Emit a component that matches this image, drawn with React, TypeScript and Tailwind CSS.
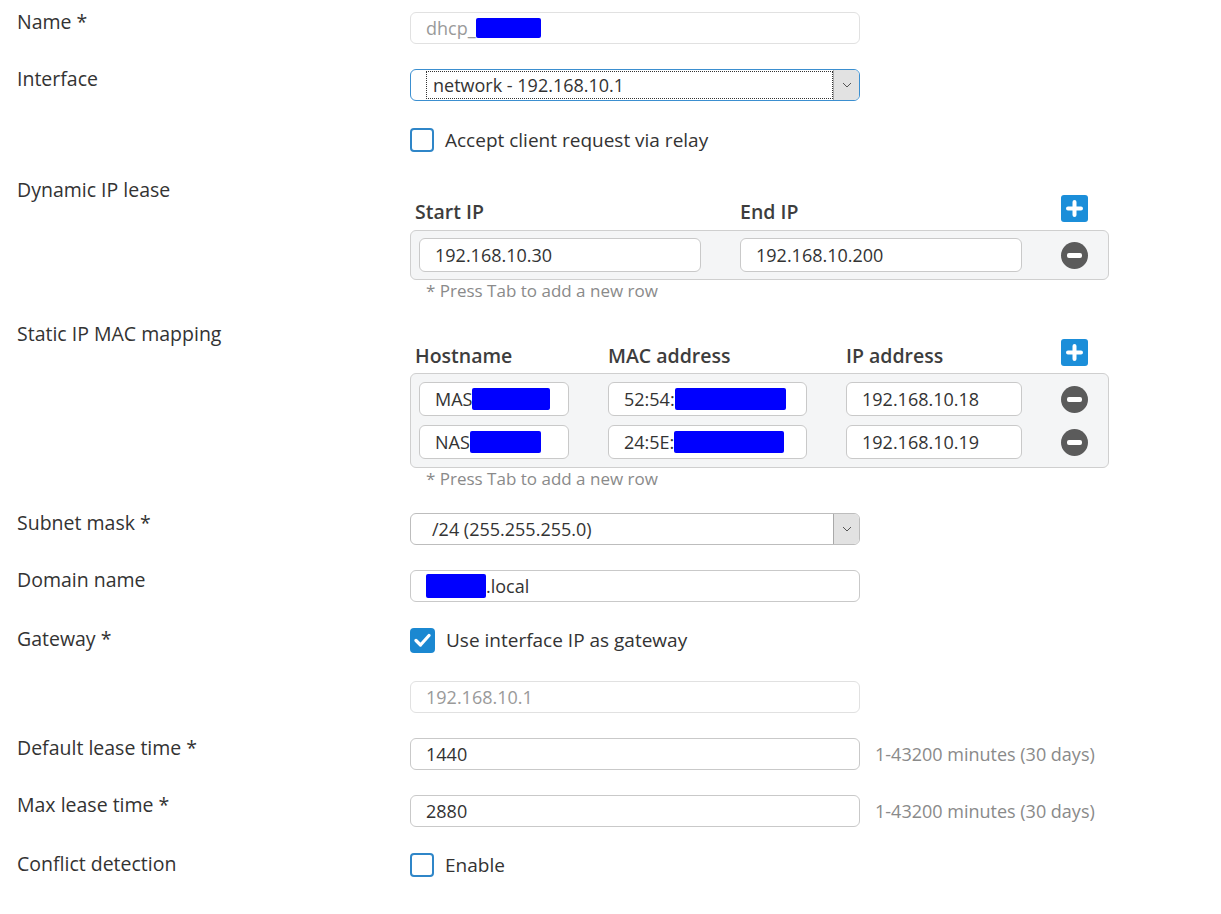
import React from 'react';

const Redact = ({ w, h = 22 }: { w: number; h?: number }) => (
  <span className="inline-block bg-[#0000ff] rounded-[2px] align-middle" style={{ width: w, height: h }} />
);

const TextBox = ({
  children,
  w = 'w-[450px]',
  h = 'h-[32px]',
  muted = false,
}: {
  children: React.ReactNode;
  w?: string;
  h?: string;
  muted?: boolean;
}) => (
  <div
    className={`${w} ${h} shrink-0 flex items-center px-[15px] rounded-[6px] border bg-white ${
      muted ? 'border-[#e1e1e1] text-[#9a9a9a]' : 'border-[#c9c9c9] text-[#333]'
    } text-[18px] whitespace-nowrap overflow-hidden`}
  >
    {children}
  </div>
);

const Select = ({ value, focused = false }: { value: string; focused?: boolean }) => (
  <div
    className={`w-[450px] h-[32px] flex rounded-[6px] border bg-white overflow-hidden ${
      focused ? 'border-[#3b8fd0]' : 'border-[#bdbdbd]'
    }`}
  >
    <div className="flex-1 pl-[15px] py-[1px] flex">
      <div
        className={`flex-1 flex items-center pl-[6px] text-[18px] text-[#333] ${
          focused ? 'border border-dotted border-[#333]' : ''
        }`}
      >
        {value}
      </div>
    </div>
    <div className="w-[26px] bg-[#e2e2e2] border-l border-[#a9a9a9] flex items-center justify-center">
      <svg width="10" height="6" viewBox="0 0 10 6">
        <path d="M1 1l4 4 4-4" fill="none" stroke="#555" strokeWidth="1" />
      </svg>
    </div>
  </div>
);

const Check = ({ checked = false, label }: { checked?: boolean; label: string }) => (
  <div className="flex items-center h-[22px]">
    {checked ? (
      <div className="w-[25px] h-[25px] shrink-0 rounded-[4px] bg-[#1b88d1] flex items-center justify-center">
        <svg width="17" height="14" viewBox="0 0 17 14">
          <path d="M2 7.5l4.5 4.5L15 2.5" fill="none" stroke="#fff" strokeWidth="3.2" strokeLinecap="round" strokeLinejoin="round" />
        </svg>
      </div>
    ) : (
      <div className="w-[24px] h-[24px] shrink-0 rounded-[4px] border-2 border-[#2f86c8] bg-white" />
    )}
    <span className="ml-[11px] text-[19px] leading-[22px] text-[#333]">{label}</span>
  </div>
);

const PlusBtn = () => (
  <div className="w-[27px] h-[27px] rounded-[3px] bg-[#1b8ed9] flex items-center justify-center">
    <svg width="17" height="17" viewBox="0 0 17 17">
      <path d="M8.5 2v13M2 8.5h13" stroke="#fff" strokeWidth="4" strokeLinecap="round" />
    </svg>
  </div>
);

const MinusBtn = () => (
  <div className="w-[27px] h-[27px] rounded-full bg-[#5b5b5b] flex items-center justify-center shrink-0">
    <div className="w-[15px] h-[5px] rounded-[2px] bg-white" />
  </div>
);

const Label = ({ children }: { children: React.ReactNode }) => (
  <div className="w-[410px] shrink-0 pl-[17px] text-[19.5px] leading-[25px] text-[#333] mt-[-3px]">{children}</div>
);

const Hint = () => (
  <div className="pl-[16px] h-[22px] leading-[22px] text-[17px] text-[#8a8a8a]">* Press Tab to add a new row</div>
);

const Range = () => (
  <div className="ml-[15px] h-[32px] flex items-center text-[18px] text-[#8a8a8a] whitespace-nowrap">
    1-43200 minutes (30 days)
  </div>
);

export default function App() {
  return (
    <div className="min-h-[914px] bg-white pt-[12px]" style={{ fontFamily: '"Open Sans", "Noto Sans", sans-serif' }}>
      {/* Name */}
      <div className="flex">
        <Label>Name *</Label>
        <TextBox muted>
          dhcp_
          <Redact w={65} h={20} />
        </TextBox>
      </div>

      {/* Interface */}
      <div className="flex mt-[25px]">
        <Label>Interface</Label>
        <Select value="network - 192.168.10.1" focused />
      </div>

      <div className="flex mt-[28px] pl-[410px]">
        <Check label="Accept client request via relay" />
      </div>

      {/* Dynamic IP lease */}
      <div className="flex mt-[26px]">
        <div className="w-[410px] shrink-0 pl-[17px] text-[19.5px] leading-[25px] text-[#333]">Dynamic IP lease</div>
        <div className="pt-[18px]">
          <div className="flex h-[27px] pl-[5px] text-[19.5px] font-semibold text-[#3d3d3d]">
            <div className="w-[325px] pt-[4px] leading-[25px]">Start IP</div>
            <div className="w-[321px] pt-[4px] leading-[25px]">End IP</div>
            <PlusBtn />
          </div>
          <div className="mt-[8px] w-[699px] border border-[#cfcfcf] rounded-[6px] bg-[#f4f5f6] px-[8px] py-[7px] flex items-center gap-[39px]">
            <TextBox w="w-[282px]" h="h-[34px]">192.168.10.30</TextBox>
            <TextBox w="w-[282px]" h="h-[34px]">192.168.10.200</TextBox>
            <MinusBtn />
          </div>
          <Hint />
        </div>
      </div>

      {/* Static IP MAC mapping */}
      <div className="flex mt-[19px]">
        <div className="w-[410px] shrink-0 pl-[17px] text-[19.5px] leading-[25px] text-[#333]">Static IP MAC mapping</div>
        <div className="pt-[18px]">
          <div className="flex h-[27px] pl-[5px] text-[19.5px] font-semibold text-[#3d3d3d]">
            <div className="w-[193px] pt-[4px] leading-[25px]">Hostname</div>
            <div className="w-[238px] pt-[4px] leading-[25px]">MAC address</div>
            <div className="w-[215px] pt-[4px] leading-[25px]">IP address</div>
            <PlusBtn />
          </div>
          <div className="mt-[7px] w-[699px] border border-[#cfcfcf] rounded-[6px] bg-[#f4f5f6] px-[8px] pt-[8px] pb-[8px] flex flex-col gap-[9px]">
            <div className="flex items-center gap-[39px]">
              <TextBox w="w-[150px]" h="h-[34px]">
                MAS
                <Redact w={78} />
              </TextBox>
              <TextBox w="w-[199px]" h="h-[34px]">
                52:54:
                <Redact w={111} />
              </TextBox>
              <TextBox w="w-[176px]" h="h-[34px]">192.168.10.18</TextBox>
              <MinusBtn />
            </div>
            <div className="flex items-center gap-[39px]">
              <TextBox w="w-[150px]" h="h-[34px]">
                NAS
                <Redact w={71} />
              </TextBox>
              <TextBox w="w-[199px]" h="h-[34px]">
                24:5E:
                <Redact w={110} />
              </TextBox>
              <TextBox w="w-[176px]" h="h-[34px]">192.168.10.19</TextBox>
              <MinusBtn />
            </div>
          </div>
          <Hint />
        </div>
      </div>

      {/* Subnet mask */}
      <div className="flex mt-[23px]">
        <Label>Subnet mask *</Label>
        <Select value="/24 (255.255.255.0)" />
      </div>

      {/* Domain name */}
      <div className="flex mt-[25px]">
        <Label>Domain name</Label>
        <TextBox>
          <Redact w={60} h={24} />
          .local
        </TextBox>
      </div>

      {/* Gateway */}
      <div className="flex mt-[27px]">
        <Label>Gateway *</Label>
        <Check checked label="Use interface IP as gateway" />
      </div>
      <div className="flex mt-[30px] pl-[410px]">
        <TextBox muted>192.168.10.1</TextBox>
      </div>

      {/* Lease times */}
      <div className="flex items-start mt-[25px]">
        <Label>Default lease time *</Label>
        <TextBox>1440</TextBox>
        <Range />
      </div>
      <div className="flex items-start mt-[25px]">
        <Label>Max lease time *</Label>
        <TextBox>2880</TextBox>
        <Range />
      </div>

      {/* Conflict detection */}
      <div className="flex mt-[27px]">
        <Label>Conflict detection</Label>
        <Check label="Enable" />
      </div>
    </div>
  );
}
